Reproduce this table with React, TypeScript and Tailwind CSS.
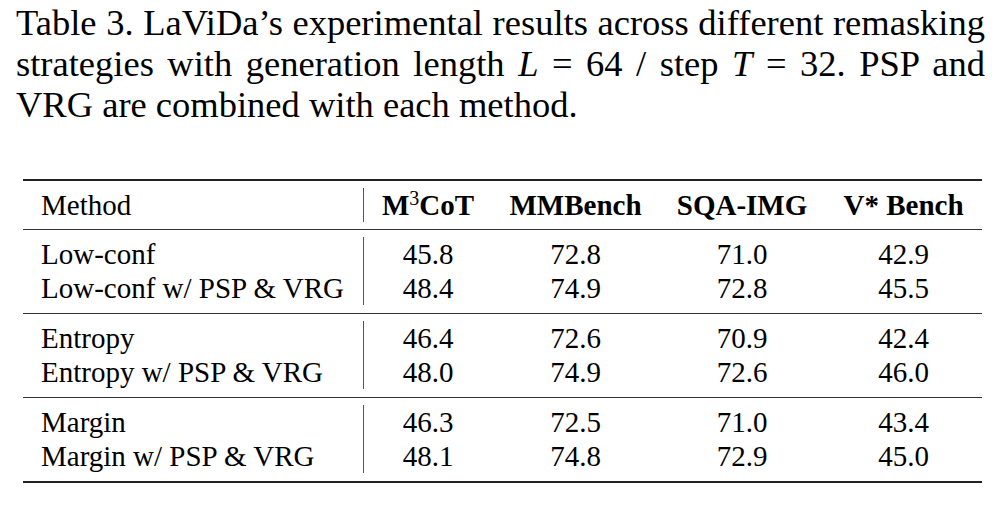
const groups = [
    [
        ["Low-conf", "45.8", "72.8", "71.0", "42.9"],
        ["Low-conf w/ PSP & VRG", "48.4", "74.9", "72.8", "45.5"],
    ],
    [
        ["Entropy", "46.4", "72.6", "70.9", "42.4"],
        ["Entropy w/ PSP & VRG", "48.0", "74.9", "72.6", "46.0"],
    ],
    [
        ["Margin", "46.3", "72.5", "71.0", "43.4"],
        ["Margin w/ PSP & VRG", "48.1", "74.8", "72.9", "45.0"],
    ],
]

const cols = "grid grid-cols-[340px_129px_167px_166px_157px]"

function Row({ cells }: { cells: string[] }) {
    return (
        <div className={`${cols} h-[34px] leading-[34px]`}>
            <div className="pl-[18px] whitespace-nowrap">{cells[0]}</div>
            {cells.slice(1).map((c, i) => (
                <div key={i} className={`text-center ${i === 0 ? "border-l border-[#555]" : ""}`}>
                    {c}
                </div>
            ))}
        </div>
    )
}

export default function App() {
    return (
        <div className="w-[1007px] h-[506px] bg-white text-black font-['Liberation_Serif','Times_New_Roman',serif] overflow-hidden">
            <div className="pl-[16px] pr-[22px] pt-[2px] text-[36.5px] leading-[41px]">
                <div className="[text-align-last:justify] whitespace-nowrap">Table 3. LaViDa’s experimental results across different remasking</div>
                <div className="[text-align-last:justify] whitespace-nowrap">
                    strategies with generation length <i>L</i> = 64 / step <i>T</i> = 32. PSP and
                </div>
                <div>VRG are combined with each method.</div>
            </div>

            <div className="ml-[23px] mt-[54px] w-[959px] text-[29px]">
                <div className="border-t-2 border-[#222]" />
                <div className={`${cols} py-[7px] h-[48px] leading-[34px] font-bold`}>
                    <div className="pl-[18px] font-normal">Method</div>
                    <div className="text-center border-l border-[#555]">
                        M<sup className="text-[20px] font-normal">3</sup>CoT
                    </div>
                    <div className="text-center">MMBench</div>
                    <div className="text-center">SQA-IMG</div>
                    <div className="text-center">V* Bench</div>
                </div>
                {groups.map((g, gi) => (
                    <div key={gi} className={`border-t border-[#333] pt-[7px] pb-[8px] ${gi === groups.length - 1 ? "border-b-2 border-b-[#222]" : ""}`}>
                        {g.map((r, ri) => (
                            <Row key={ri} cells={r} />
                        ))}
                    </div>
                ))}
            </div>
        </div>
    )
}
